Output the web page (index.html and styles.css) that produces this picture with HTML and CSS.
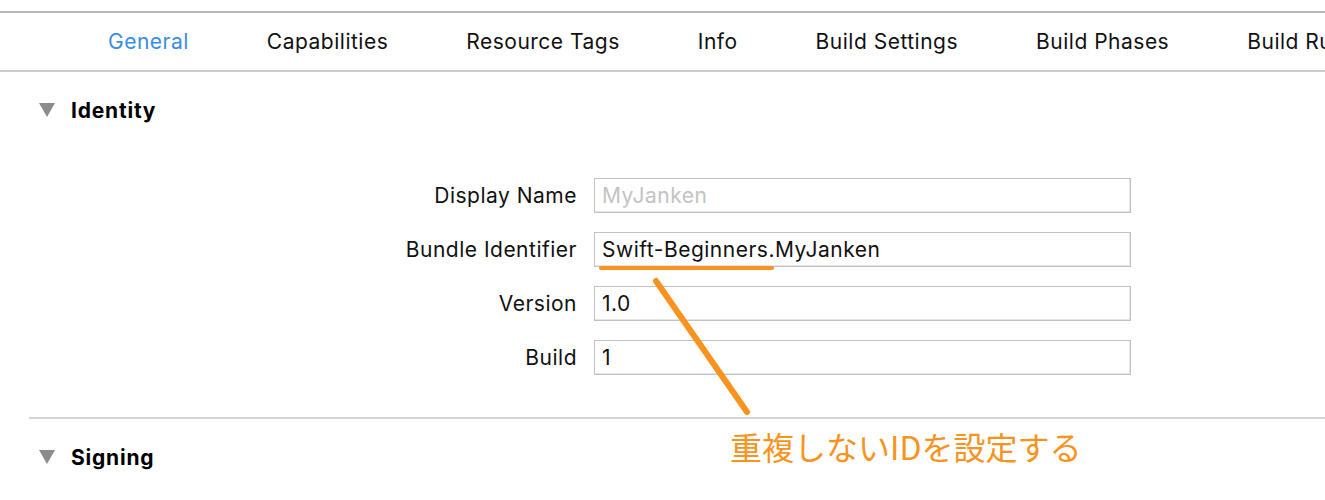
FILE: index.html
```html
<!DOCTYPE html>
<html lang="ja">
<head>
<meta charset="utf-8">
<title>General</title>
<link rel="stylesheet" href="styles.css">
</head>
<body>
<div class="page">
  <nav class="tabs">
    <span class="tab active">General</span>
    <span class="tab">Capabilities</span>
    <span class="tab">Resource Tags</span>
    <span class="tab">Info</span>
    <span class="tab">Build Settings</span>
    <span class="tab">Build Phases</span>
    <span class="tab">Build Rules</span>
  </nav>

  <section class="section identity">
    <h2 class="heading"><span class="disclosure"></span>Identity</h2>
    <div class="form">
      <label class="label">Display Name</label>
      <div class="field placeholder">MyJanken</div>
      <label class="label">Bundle Identifier</label>
      <div class="field">Swift-Beginners.MyJanken</div>
      <label class="label">Version</label>
      <div class="field">1.0</div>
      <label class="label">Build</label>
      <div class="field">1</div>
    </div>
  </section>

  <div class="separator"></div>

  <section class="section signing">
    <h2 class="heading"><span class="disclosure"></span>Signing</h2>
  </section>

  <svg class="annotation" width="1325" height="500" viewBox="0 0 1325 500">
    <line x1="601" y1="268" x2="772" y2="268" stroke="#f7931e" stroke-width="4" stroke-linecap="round"/>
    <line x1="656" y1="281" x2="747" y2="412" stroke="#f7931e" stroke-width="6" stroke-linecap="round"/>
  </svg>
  <div class="note">重複しないIDを設定する</div>
</div>
</body>
</html>
```

FILE: styles.css
```css
html, body {
  margin: 0;
  padding: 0;
  background: #ffffff;
}

body {
  font-family: "Inter", "Roboto", "Liberation Sans", sans-serif;
  color: #111111;
  width: 1325px;
  height: 500px;
  overflow: hidden;
}

.page {
  position: relative;
  width: 1325px;
  height: 500px;
  padding-top: 11px;
  box-sizing: border-box;
}

.tabs {
  display: flex;
  align-items: center;
  gap: 78px;
  height: 57px;
  padding-left: 108px;
  border-top: 2px solid #b5b5b5;
  border-bottom: 2px solid #cccccc;
  white-space: nowrap;
  overflow: hidden;
  font-size: 21px;
  letter-spacing: 0.5px;
}

.tab {
  color: #111111;
  flex: none;
}

.tab.active {
  color: #3a8de0;
}

.section {
  padding-left: 39px;
}

.heading {
  display: flex;
  align-items: center;
  margin: 0;
  height: 24px;
  font-size: 21px;
  font-weight: 700;
  letter-spacing: 0.8px;
  color: #000000;
}

.identity .heading {
  margin-top: 26px;
}

.disclosure {
  width: 0;
  height: 0;
  border-left: 8px solid transparent;
  border-right: 8px solid transparent;
  border-top: 14px solid #8c8c8c;
  margin-right: 16px;
}

.form {
  display: grid;
  grid-template-columns: 538px 537px;
  column-gap: 17px;
  row-gap: 19px;
  margin-top: 56px;
  align-items: center;
}

.label {
  text-align: right;
  font-size: 21px;
  letter-spacing: 0.5px;
  color: #111111;
}

.field {
  height: 35px;
  box-sizing: border-box;
  border: 1px solid #c2c2c2;
  box-shadow: inset -1px -1px 0 #e6e6e6;
  padding-left: 7px;
  display: flex;
  align-items: center;
  font-size: 21px;
  letter-spacing: 0.5px;
  color: #111111;
}

.field.placeholder {
  color: #c3c3c3;
}

.separator {
  margin: 42px 0 0 29px;
  height: 2px;
  background: #d4d4d4;
}

.signing .heading {
  margin-top: 26px;
}

.annotation {
  position: absolute;
  left: 0;
  top: 0;
  pointer-events: none;
}

.note {
  position: absolute;
  left: 730px;
  top: 426px;
  font-family: "Noto Sans CJK JP", "Noto Sans", sans-serif;
  font-size: 32px;
  line-height: 40px;
  color: #f7931e;
  white-space: nowrap;
}
```
